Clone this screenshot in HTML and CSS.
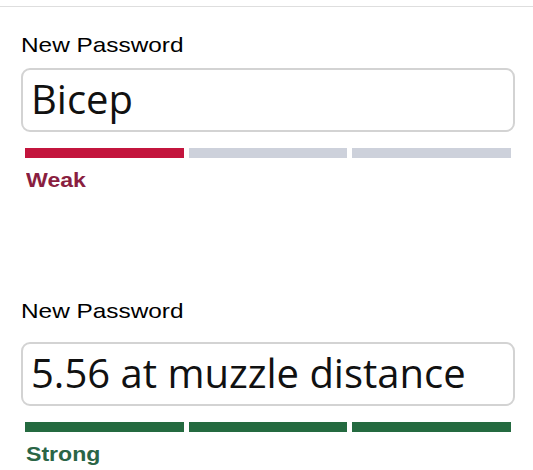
FILE: index.html
```html
<!DOCTYPE html>
<html lang="en">
<head>
  <meta charset="UTF-8" />
  <title>New Password</title>
  <link rel="stylesheet" href="styles.css">
</head>
<body>

  <div class="topbar"></div>

  <form class="pw-form">
    <!-- weak password -->
    <div class="field">
      <label class="field-label" for="pw1"><span>New Password</span></label>
      <input class="field-input" id="pw1" type="text" value="Bicep">
      <div class="meter meter-weak">
        <span class="on"></span><span></span><span></span>
      </div>
      <div class="meter-text weak"><span>Weak</span></div>
    </div>

    <!-- strong password -->
    <div class="field field-second">
      <label class="field-label" for="pw2"><span>New Password</span></label>
      <input class="field-input" id="pw2" type="text" value="5.56 at muzzle distance">
      <div class="meter meter-strong">
        <span class="on"></span><span class="on"></span><span class="on"></span>
      </div>
      <div class="meter-text strong"><span>Strong</span></div>
    </div>
  </form>

</body>
</html>
```

FILE: styles.css
```css
body {
  margin: 0;
  background: #fff;
  font-family: "Liberation Sans", Arial, sans-serif;
  color: #111;
}
.topbar {
  margin-top: 6px;
  height: 1px;
  background: #dedede;
}
.pw-form {
  padding: 26px 18px 0 21px;
}
.field-label {
  display: block;
  font-size: 21px;
  line-height: 24px;
  margin-bottom: 11px;
  color: #000;
}
.field-label span,
.meter-text span {
  display: inline-block;
  transform-origin: left center;
}
.field-label span {
  transform: scaleX(1.16);
}
.field-input {
  display: block;
  box-sizing: border-box;
  width: 100%;
  height: 64px;
  margin: 0;
  padding: 0 8px 4px;
  border: 2px solid #d3d3d3;
  border-radius: 9px;
  background: #fff;
  font-family: "Open Sans", sans-serif;
  font-size: 40px;
  color: #111;
  outline: none;
}
.meter {
  display: grid;
  grid-template-columns: repeat(3, 1fr);
  gap: 5px;
  margin: 16px 4px 0;
}
.meter span {
  height: 10px;
  background: #cdd1db;
}
.meter-weak .on {
  background: #c3153d;
}
.meter-strong .on {
  background: #246a40;
}
.meter-text {
  margin-top: 10px;
  padding-left: 5px;
  font-size: 21px;
  line-height: 24px;
  font-weight: bold;
}
.meter-text span {
  transform: scaleX(1.1);
}
.meter-text.weak {
  color: #8a1e40;
}
.meter-text.strong {
  color: #2a6546;
}
.field-second {
  margin-top: 107px;
}
.field-second .field-label {
  margin-bottom: 19px;
}
```
